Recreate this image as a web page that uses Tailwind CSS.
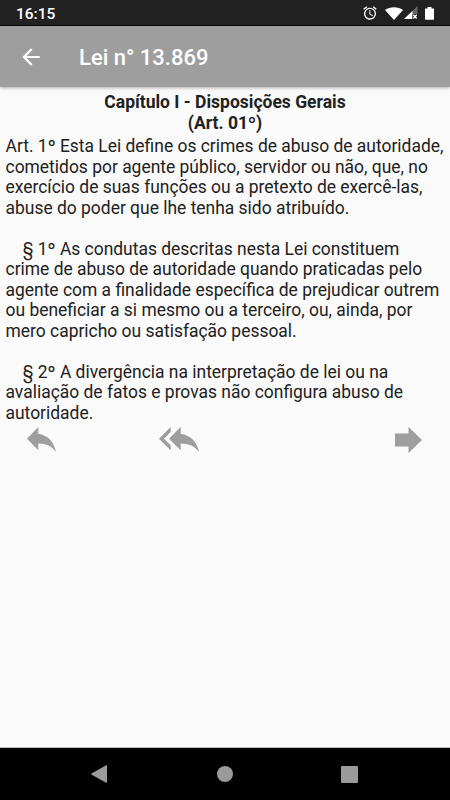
<!DOCTYPE html>
<html lang="pt-BR">
<head>
    <meta charset="UTF-8">
    <meta name="viewport" content="width=device-width, initial-scale=1.0">
    <title>Lei n° 13.869</title>
    <script src="https://cdn.jsdelivr.net/npm/@tailwindcss/browser@4"></script>
</head>
<body class="bg-[#fafafa] h-screen flex flex-col overflow-hidden font-[Roboto,sans-serif]">
    <!-- Status bar -->
    <div class="h-[26px] shrink-0 bg-[#212121] border-b border-black text-white flex items-center justify-between pl-[16px] pr-[16px]">
        <span class="text-[15.5px] font-medium leading-none pt-[4px]">16:15</span>
        <div class="flex items-center pt-px">
            <svg class="w-[16px] h-[16px]" viewBox="0 0 24 24" fill="white"><path d="M22 5.72l-4.6-3.86-1.29 1.53 4.6 3.86L22 5.72zM7.88 3.39L6.6 1.86 2 5.71l1.29 1.53 4.59-3.85zM12.5 8H11v6l4.75 2.85.75-1.23-4-2.37V8zM12 4c-4.97 0-9 4.03-9 9s4.02 9 9 9a9 9 0 0 0 0-18zm0 16c-3.87 0-7-3.13-7-7s3.13-7 7-7 7 3.13 7 7-3.13 7-7 7z"/></svg>
            <svg class="w-[18px] h-[13px] ml-[7px]" viewBox="0 0 18 13" fill="white"><path d="M0 3C5-.8 13-.8 18 3L9 13z"/></svg>
            <svg class="w-[14px] h-[14px] ml-px" viewBox="0 0 14 14"><path d="M13.500 0v13H0z" fill="#666"/><path d="M8.500 5v8H0z" fill="white"/><path d="M8.500 8H14v6H8.500z" fill="#212121"/><path d="M9.300 8.800l3.400 3.600m0-3.600l-3.400 3.600" stroke="white" stroke-width="1.4"/></svg>
            <svg class="w-[9px] h-[13px] ml-[7px]" viewBox="0 0 9 14" preserveAspectRatio="none" fill="white"><path d="M2.500 0h4v1.500H9V13a.7.7 0 0 1-.7.7H.7A.7.7 0 0 1 0 13V1.500h2.500z"/></svg>
        </div>
    </div>

    <!-- App bar -->
    <header class="h-[61px] shrink-0 bg-[#9e9e9e] text-white flex items-center pl-[18px] shadow-[0_1px_3px_rgba(0,0,0,0.3)]">
        <svg class="w-[26px] h-[26px]" viewBox="0 0 24 24" fill="white"><path d="M20 11H7.830l5.590-5.590L12 4l-8 8 8 8 1.410-1.410L7.830 13H20v-2z"/></svg>
        <h1 class="ml-[35px] text-[22px] font-medium leading-none pt-[3px]">Lei n° 13.869</h1>
    </header>

    <main class="flex-1 text-[#212121] pt-[5px] border-b border-[#bdbdbd]">
        <h2 class="text-center font-bold text-[17.5px] leading-[20.5px]">Capítulo I - Disposições Gerais<br>(Art. 01º)</h2>
        <div class="pl-[5.5px] pt-[3px] text-[17.45px] leading-[20.5px] whitespace-nowrap">
            <p>Art. 1º Esta Lei define os crimes de abuso de autoridade,<br>cometidos por agente público, servidor ou não, que, no<br>exercício de suas funções ou a pretexto de exercê-las,<br>abuse do poder que lhe tenha sido atribuído.</p>
            <p class="pt-[20.5px]">&nbsp;&nbsp;&nbsp;&nbsp;§ 1º As condutas descritas nesta Lei constituem<br>crime de abuso de autoridade quando praticadas pelo<br>agente com a finalidade específica de prejudicar outrem<br>ou beneficiar a si mesmo ou a terceiro, ou, ainda, por<br>mero capricho ou satisfação pessoal.</p>
            <p class="pt-[20.5px]">&nbsp;&nbsp;&nbsp;&nbsp;§ 2º A divergência na interpretação de lei ou na<br>avaliação de fatos e provas não configura abuso de<br>autoridade.</p>
        </div>
        <div class="flex justify-between pl-[27px] pr-[28px] pt-[4px]">
            <svg class="w-[29px] h-[25px]" viewBox="3 5 18 15" preserveAspectRatio="none" fill="#9e9e9e"><path d="M10 9V5l-7 7 7 7v-4.100c5 0 8.500 1.600 11 5.100-1-5-4-10-11-11z"/></svg>
            <svg class="w-[40px] h-[25px] mr-[93px]" viewBox="0 5 24 15" preserveAspectRatio="none" fill="#9e9e9e"><path d="M7 8V5l-7 7 7 7v-3l-4-4 4-4zm6 1V5l-7 7 7 7v-4.100c5 0 8.500 1.600 11 5.100-1-5-4-10-11-11z"/></svg>
            <svg class="w-[27px] h-[26px]" viewBox="0 0 27 26" fill="#9e9e9e"><path d="M0 6.500h13.500V0L27 13 13.500 26v-6.500H0z"/></svg>
        </div>
    </main>

    <!-- Navigation bar -->
    <nav class="h-[52px] shrink-0 bg-black flex items-center justify-between pl-[91px] pr-[92px]">
        <svg class="w-[16px] h-[18px]" viewBox="0 0 16 18" fill="#9a9a9a"><path d="M16 .8v16.400a.6.6 0 0 1-.9.5L.4 9.500a.6.6 0 0 1 0-1L15.100.3a.6.6 0 0 1 .9.5z"/></svg>
        <div class="w-4 h-4 rounded-full bg-[#9a9a9a] ml-[2px]"></div>
        <div class="w-[17px] h-[17px] rounded-[1px] bg-[#9a9a9a]"></div>
    </nav>
</body>
</html>
